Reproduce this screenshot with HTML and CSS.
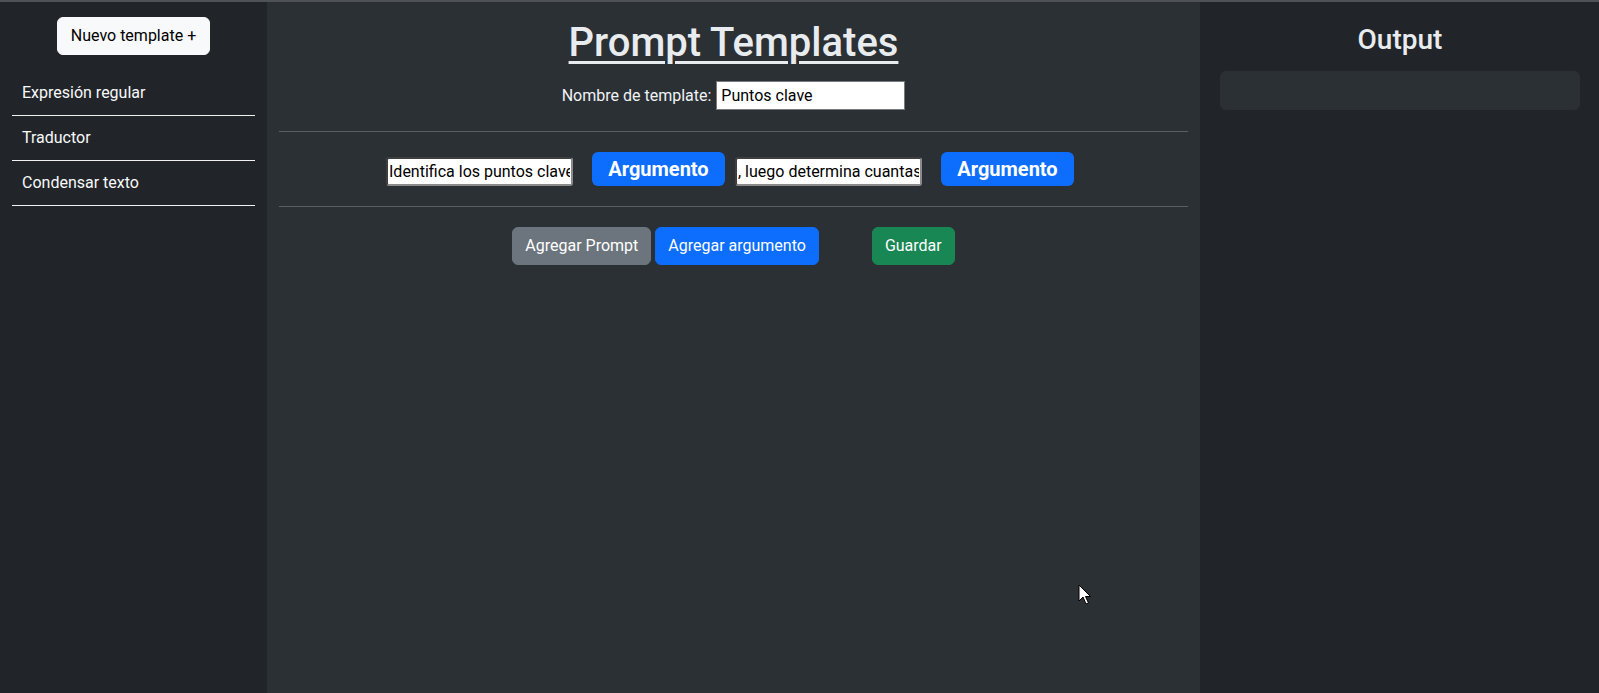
FILE: index.html
```html
<!DOCTYPE html>
<html lang="es">
<head>
<meta charset="utf-8">
<title>Prompt Templates</title>
<link rel="stylesheet" href="styles.css">
</head>
<body>
<div class="app">
  <aside class="sidebar">
    <div class="new-wrap"><button class="btn btn-light">Nuevo template +</button></div>
    <ul class="tpl-list">
      <li class="tpl-item">Expresión regular</li>
      <li class="tpl-item">Traductor</li>
      <li class="tpl-item">Condensar texto</li>
    </ul>
  </aside>
  <main class="editor">
    <h1 class="title">Prompt Templates</h1>
    <div class="name-row">
      <label class="name-label" for="tname">Nombre de template:</label>
      <input id="tname" class="name-input" type="text" value="Puntos clave">
    </div>
    <div class="rule"></div>
    <div class="parts-row">
      <input class="part-input" type="text" value="Identifica los puntos clave">
      <button class="arg-btn arg-gap">Argumento</button>
      <input class="part-input" type="text" value=", luego determina cuantas palabras tiene">
      <button class="arg-btn">Argumento</button>
    </div>
    <div class="rule rule-2"></div>
    <div class="actions">
      <button class="btn btn-secondary">Agregar Prompt</button>
      <button class="btn btn-primary">Agregar argumento</button>
      <button class="btn btn-success btn-save">Guardar</button>
    </div>
  </main>
  <section class="output">
    <h3 class="out-title">Output</h3>
    <div class="out-box"></div>
  </section>
</div>
<svg class="cursor" width="14" height="22" viewBox="0 0 14 22"><path d="M1 1 L1 17 L5 13 L8 20 L10.5 19 L7.5 12.5 L12.5 12.5 Z" fill="#fff" stroke="#000" stroke-width="1" stroke-linejoin="round"/></svg>
</body>
</html>
```
FILE: styles.css
```css
* { box-sizing: border-box; }
html, body { margin: 0; padding: 0; }
body {
  font-family: Roboto, "Liberation Sans", sans-serif;
  font-size: 16px;
  line-height: 24px;
  color: #dee2e6;
  background: #212529;
}
.app {
  display: grid;
  grid-template-columns: 267px 933px 1fr;
  height: 693px;
  border-top: 2px solid #4f5256;
  overflow: hidden;
}
.sidebar {
  background: #212529;
  padding: 15px 12px 0;
}
.new-wrap { display: flex; justify-content: center; }
.btn {
  font-family: inherit;
  font-size: 16px;
  line-height: 24px;
  height: 38px;
  padding: 6px 12px;
  border-radius: 6px;
  border: 1px solid transparent;
  cursor: pointer;
}
.btn-light { background: #f8f9fa; border-color: #f8f9fa; color: #000; padding: 6px 13px; }
.btn-secondary { background: #6c757d; border-color: #6c757d; color: #fff; }
.btn-primary { background: #0d6efd; border-color: #0d6efd; color: #fff; }
.btn-success { background: #198754; border-color: #198754; color: #fff; }
.tpl-list {
  list-style: none;
  margin: 16px 0 0;
  padding: 0;
}
.tpl-item {
  padding: 10px 10px;
  border-bottom: 1px solid #f1f1f1;
  color: #f8f9fa;
  line-height: 24px;
}
.editor {
  background: #2b3035;
  padding: 17px 12px 0;
}
.title {
  margin: 0;
  text-align: center;
  font-size: 40px;
  line-height: 48px;
  font-weight: 500;
  color: #e9ecef;
  text-decoration: underline;
  text-decoration-thickness: 3px;
  text-underline-offset: 5px;
}
.name-row {
  margin-top: 14px;
  display: flex;
  justify-content: center;
  align-items: center;
  gap: 5px;
}
.name-label { color: #f1f3f5; }
.name-input {
  width: 189px;
  height: 29px;
  border: 1px solid #7a7a7a;
  padding: 0 4px;
  font-family: inherit;
  font-size: 16px;
  color: #000;
  background: #fff;
}
.rule {
  height: 1px;
  background: #5b5f64;
  margin-top: 21px;
}
.parts-row {
  margin-top: 20px;
  display: flex;
  justify-content: center;
  align-items: flex-end;
  padding-right: 7px;
}
.part-input {
  width: 187px;
  height: 29px;
  border: 2px solid;
  border-color: #3f3f3f #8a8a8a #8a8a8a #3f3f3f;
  border-radius: 3px;
  padding: 0 1px;
  font-family: inherit;
  font-size: 16px;
  color: #000;
  background: #fff;
  margin-right: 19px;
}
.arg-btn {
  width: 133px;
  height: 34px;
  padding: 0;
  border: none;
  border-radius: 6px;
  background: #0d6efd;
  color: #fff;
  font-family: inherit;
  font-size: 20px;
  font-weight: 700;
  line-height: 34px;
}
.arg-gap { margin-right: 10px; }
.rule-2 { margin-top: 20px; }
.actions {
  margin-top: 20px;
  display: flex;
  justify-content: center;
  gap: 4px;
}
.btn-save { margin-left: 49px; }
.output {
  background: #212529;
  padding: 21px 19px 0 20px;
}
.out-title {
  margin: 0;
  text-align: center;
  font-size: 28px;
  line-height: 34px;
  font-weight: 500;
  color: #e9ecef;
}
.out-box {
  margin-top: 14px;
  height: 39px;
  background: #2b3035;
  border-radius: 6px;
}
.cursor {
  position: absolute;
  left: 1078px;
  top: 584px;
}
```
